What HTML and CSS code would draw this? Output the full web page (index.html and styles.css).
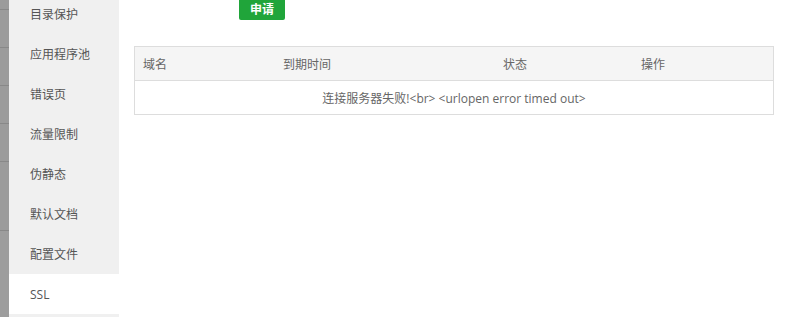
FILE: index.html
```html
<!DOCTYPE html>
<html lang="zh-CN">
<head>
<meta charset="utf-8">
<link rel="stylesheet" href="styles.css">
</head>
<body>
<div class="page">
  <div class="strip">
    <div class="seg s1"></div>
    <div class="seg"></div>
    <div class="seg"></div>
    <div class="seg"></div>
    <div class="seg"></div>
    <div class="seg s6"></div>
    <div class="seg last"></div>
  </div>
  <ul class="menu">
    <li>目录保护</li>
    <li>应用程序池</li>
    <li>错误页</li>
    <li>流量限制</li>
    <li>伪静态</li>
    <li>默认文档</li>
    <li>配置文件</li>
    <li class="active">SSL</li>
    <li></li>
  </ul>
  <div class="main">
    <div class="toolbar"><button class="btn">申请</button></div>
    <table class="grid">
      <thead>
        <tr><th class="c1">域名</th><th class="c2">到期时间</th><th class="c3">状态</th><th class="c4">操作</th></tr>
      </thead>
      <tbody>
        <tr><td colspan="4" class="msg">连接服务器失败!&lt;br&gt; &lt;urlopen error timed out&gt;</td></tr>
      </tbody>
    </table>
  </div>
</div>
</body>
</html>
```
FILE: styles.css
```css
html, body { margin: 0; padding: 0; background: #fff; }
body { font-family: "Open Sans", "Noto Sans CJK SC", sans-serif; font-size: 12px; color: #555; }
.page { display: flex; height: 317px; overflow: hidden; }
.strip { width: 9px; flex: none; display: flex; flex-direction: column; background: #9b9b9b; }
.seg { height: 37px; border-bottom: 1px solid #888; flex: none; }
.seg.s1 { height: 9px; }
.seg.s6 { height: 68px; }
.seg.last { border-bottom: none; flex: 1; background: #9d9d9d; }
.menu { list-style: none; margin: 0; padding: 0; width: 110px; flex: none; background: #f0f0f0; margin-top: -6px; }
.menu li { height: 39px; padding-top: 1px; line-height: 40px; padding-left: 21px; color: #555; }
.menu li.active { background: #fff; }
.main { flex: 1; padding-left: 15px; padding-right: 11px; }
.toolbar { display: flex; align-items: flex-start; padding-left: 105px; height: 46px; }
.btn { display: block; width: 46px; height: 30px; margin-top: -10px; border: none; border-radius: 2px; background: #20a53a; color: #fff; font-family: "Noto Sans CJK SC", sans-serif; font-size: 12px; font-weight: bold; padding: 8px 0 0; line-height: 20px; }
.grid { width: 100%; border-collapse: collapse; border: 1px solid #ddd; table-layout: fixed; }
.grid th { background: #f5f5f5; font-weight: normal; text-align: left; height: 33px; padding: 0 8px; color: #666; border-bottom: 1px solid #ddd; }
.grid th.c1 { width: 124px; }
.grid th.c2 { width: 204px; }
.grid th.c3 { width: 122px; }
.grid td { height: 33px; padding: 0 8px; color: #666; }
.grid td.msg { text-align: center; }
```
